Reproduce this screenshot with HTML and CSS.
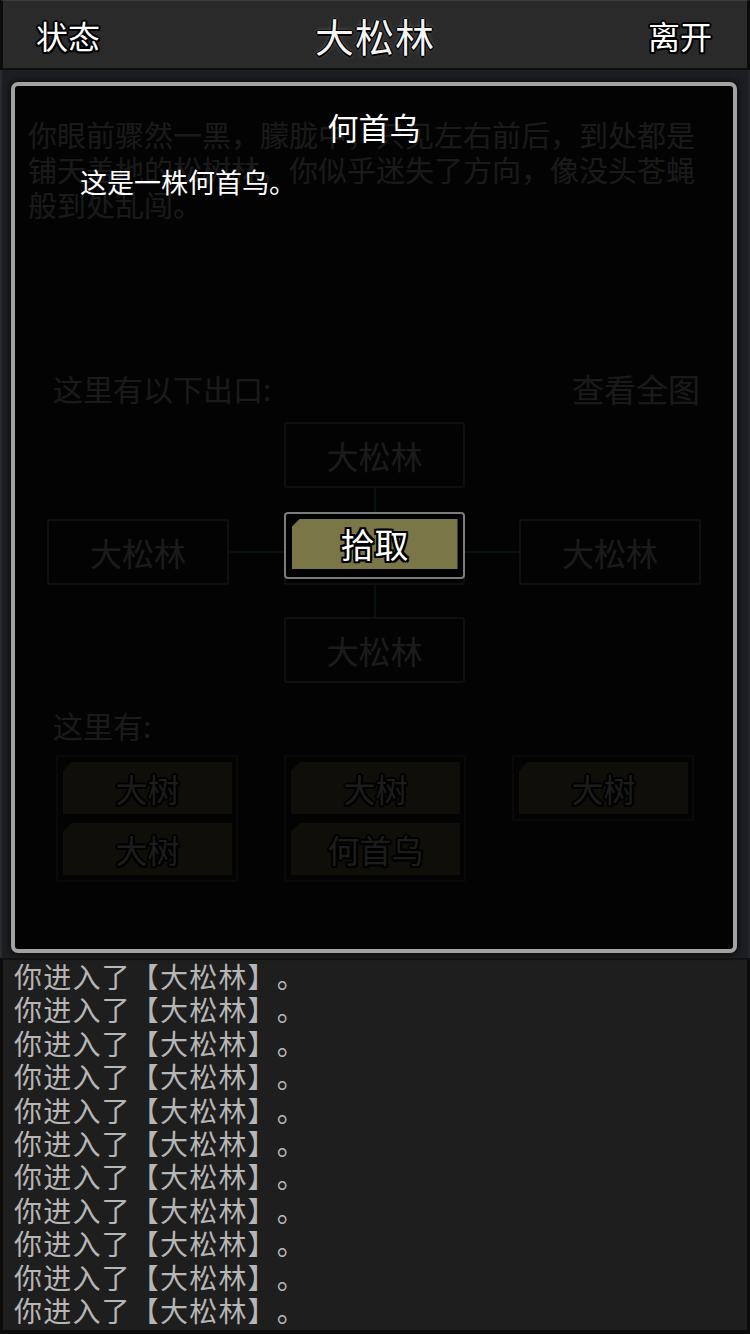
FILE: index.html
```html
<!DOCTYPE html>
<html lang="zh-CN">
<head>
<meta charset="utf-8">
<title>大松林</title>
<link rel="stylesheet" href="styles.css">
</head>
<body>
<div class="app">
  <header class="topbar">
    <span class="tb-left">状态</span>
    <span class="tb-title">大松林</span>
    <span class="tb-right">离开</span>
  </header>

  <main class="stage">
    <section class="scene">
      <p class="story">你眼前骤然一黑，朦胧中，只见左右前后，到处都是铺天盖地的松树林，你似乎迷失了方向，像没头苍蝇般到处乱闯。</p>

      <div class="section-head">
        <span class="head-label">这里有以下出口:</span>
        <span class="head-link">查看全图</span>
      </div>

      <div class="exits">
        <div class="exit ex-n">大松林</div>
        <div class="link-v ln-n"></div>
        <div class="exit ex-w">大松林</div>
        <div class="link-h ln-w"></div>
        <div class="exit ex-c">大松林</div>
        <div class="link-h ln-e"></div>
        <div class="exit ex-e">大松林</div>
        <div class="link-v ln-s"></div>
        <div class="exit ex-s">大松林</div>
      </div>

      <div class="section-head here">
        <span class="head-label">这里有:</span>
      </div>

      <div class="items">
        <div class="item-col">
          <div class="item"><span>大树</span></div>
          <div class="item"><span>大树</span></div>
        </div>
        <div class="item-col">
          <div class="item"><span>大树</span></div>
          <div class="item"><span>何首乌</span></div>
        </div>
        <div class="item-col">
          <div class="item"><span>大树</span></div>
        </div>
      </div>
    </section>

    <div class="modal">
      <h2 class="modal-title">何首乌</h2>
      <p class="modal-desc">这是一株何首乌。</p>
      <div class="pick-btn"><div class="pick-fill">拾取</div></div>
    </div>
  </main>

  <footer class="log">
    <div class="log-line">你进入了【大松林】。</div>
    <div class="log-line">你进入了【大松林】。</div>
    <div class="log-line">你进入了【大松林】。</div>
    <div class="log-line">你进入了【大松林】。</div>
    <div class="log-line">你进入了【大松林】。</div>
    <div class="log-line">你进入了【大松林】。</div>
    <div class="log-line">你进入了【大松林】。</div>
    <div class="log-line">你进入了【大松林】。</div>
    <div class="log-line">你进入了【大松林】。</div>
    <div class="log-line">你进入了【大松林】。</div>
    <div class="log-line">你进入了【大松林】。</div>
  </footer>
</div>
</body>
</html>
```

FILE: styles.css
```css
* { box-sizing: border-box; margin: 0; padding: 0; }

html, body {
  width: 750px;
  height: 1334px;
  background: #0b0b0b;
  overflow: hidden;
}

body {
  font-family: "Noto Sans CJK SC", "Noto Sans", sans-serif;
  text-spacing-trim: space-all;
}

.app {
  width: 750px;
  height: 1334px;
  display: flex;
  flex-direction: column;
}

/* ---------- top bar ---------- */
.topbar {
  height: 70px;
  flex: none;
  display: grid;
  grid-template-columns: 1fr auto 1fr;
  align-items: center;
  background: #2a2a2a;
  border-left: 3px solid #0c0c0c;
  border-right: 3px solid #0c0c0c;
  border-top: 1px solid #3a3a3a;
  border-bottom: 2px solid #0e0e0e;
  color: #fff;
  text-shadow: -2px 0 #000, 2px 0 #000, 0 -2px #000, 0 2px #000,
               -1.5px -1.5px #000, 1.5px 1.5px #000, -1.5px 1.5px #000, 1.5px -1.5px #000;
}

.tb-left {
  font-size: 32px;
  line-height: 40px;
  padding-left: 33px;
}

.tb-title {
  font-size: 39px;
  line-height: 44px;
  letter-spacing: 1px;
  color: #f4f4f4;
  text-shadow: -1.5px 0 #000, 1.5px 0 #000, 0 -1.5px #000, 0 1.5px #000,
               0 0 5px rgba(160, 160, 160, 0.6);
}

.tb-right {
  font-size: 32px;
  line-height: 40px;
  text-align: right;
  padding-right: 35px;
}

/* ---------- stage (scene + modal overlay) ---------- */
.stage {
  position: relative;
  height: 888px;
  flex: none;
  background: #1d1e21;
  border-left: 2px solid #2a2b2e;
  border-right: 2px solid #25262a;
}

.scene {
  padding-top: 47px;
  color: #d0d0d0;
}

.story {
  margin-left: 26px;
  width: 672px;
  font-size: 29px;
  line-height: 35px;
}

.section-head {
  margin-top: 146px;
  display: flex;
  justify-content: space-between;
  align-items: center;
  height: 40px;
  padding: 0 48px 0 51px;
}

.head-label {
  font-size: 30px;
  line-height: 40px;
}

.head-link {
  font-size: 32px;
  line-height: 40px;
}

.exits {
  margin-top: 14px;
  margin-left: 45px;
  display: grid;
  grid-template-columns: 182px 55px 181px 54px 182px;
  grid-template-rows: 66px 31px 66px 32px 66px;
}

.exit {
  border: 2px solid #7e7e7e;
  border-radius: 3px;
  display: flex;
  align-items: center;
  justify-content: center;
  font-size: 32px;
  color: #dcdcdc;
}

.ex-n { grid-column: 3; grid-row: 1; }
.ex-w { grid-column: 1; grid-row: 3; }
.ex-c { grid-column: 3; grid-row: 3; }
.ex-e { grid-column: 5; grid-row: 3; }
.ex-s { grid-column: 3; grid-row: 5; }

.link-v {
  width: 2px;
  justify-self: center;
  background: #3f8a86;
}
.link-h {
  height: 2px;
  align-self: center;
  background: #3f8a86;
}
.ln-n { grid-column: 3; grid-row: 2; }
.ln-s { grid-column: 3; grid-row: 4; }
.ln-w { grid-column: 2; grid-row: 3; }
.ln-e { grid-column: 4; grid-row: 3; }

.section-head.here {
  margin-top: 22px;
}

.items {
  margin-top: 10px;
  margin-left: 54px;
  display: grid;
  grid-template-columns: 182px 182px 182px;
  column-gap: 46px;
  align-items: start;
}

.item-col {
  border: 2px solid #4a4a4a;
  border-radius: 3px;
  padding: 5px 4px 5px 5px;
  display: flex;
  flex-direction: column;
  gap: 9px;
}

.item {
  height: 52px;
  background: #7a7548;
  clip-path: polygon(9px 0, 100% 0, 100% 100%, 0 100%, 0 9px);
  display: flex;
  align-items: center;
  justify-content: center;
}

.item span {
  font-size: 32px;
  line-height: 40px;
  color: #e0e0e0;
  text-shadow: -2px 0 #000, 2px 0 #000, 0 -2px #000, 0 2px #000,
               -1.5px -1.5px #000, 1.5px 1.5px #000, -1.5px 1.5px #000, 1.5px -1.5px #000;
}

/* ---------- modal ---------- */
.modal {
  position: absolute;
  left: 9px;
  top: 12px;
  width: 726px;
  height: 871px;
  border: 4px solid #a2a2a2;
  border-radius: 7px;
  background: rgba(0, 0, 0, 0.88);
  box-shadow: 0 0 6px 2px rgba(0, 0, 0, 0.55);
  color: #fff;
  padding-top: 21px;
}

.modal-title {
  font-size: 31px;
  font-weight: normal;
  line-height: 40px;
  text-align: center;
}

.modal-desc {
  margin-top: 17px;
  padding-left: 65px;
  font-size: 27px;
  line-height: 36px;
}

.pick-btn {
  margin: 312px auto 0;
  width: 181px;
  height: 67px;
  border: 2px solid #7c7c7c;
  border-radius: 4px;
  background: #000;
  padding: 5px 5px 8px 6px;
}

.pick-fill {
  height: 100%;
  background: #7a7648;
  clip-path: polygon(8px 0, 100% 0, 100% 100%, 0 100%, 0 8px);
  display: flex;
  align-items: center;
  justify-content: center;
  font-size: 34px;
  line-height: 40px;
  color: #fff;
  text-shadow: -2px 0 #000, 2px 0 #000, 0 -2px #000, 0 2px #000,
               -2px -2px #000, 2px 2px #000, -2px 2px #000, 2px -2px #000;
}

/* ---------- log ---------- */
.log {
  flex: 1;
  background: #1f1e1f;
  border-left: 3px solid #0b0b0b;
  border-right: 3px solid #0b0b0b;
  border-top: 2px solid #121212;
  border-bottom: 4px solid #0b0b0b;
  padding-left: 11px;
  overflow: hidden;
}

.log-line {
  font-size: 28px;
  line-height: 33.4px;
  letter-spacing: 1.2px;
  color: #b6b6b6;
  white-space: nowrap;
}
```
